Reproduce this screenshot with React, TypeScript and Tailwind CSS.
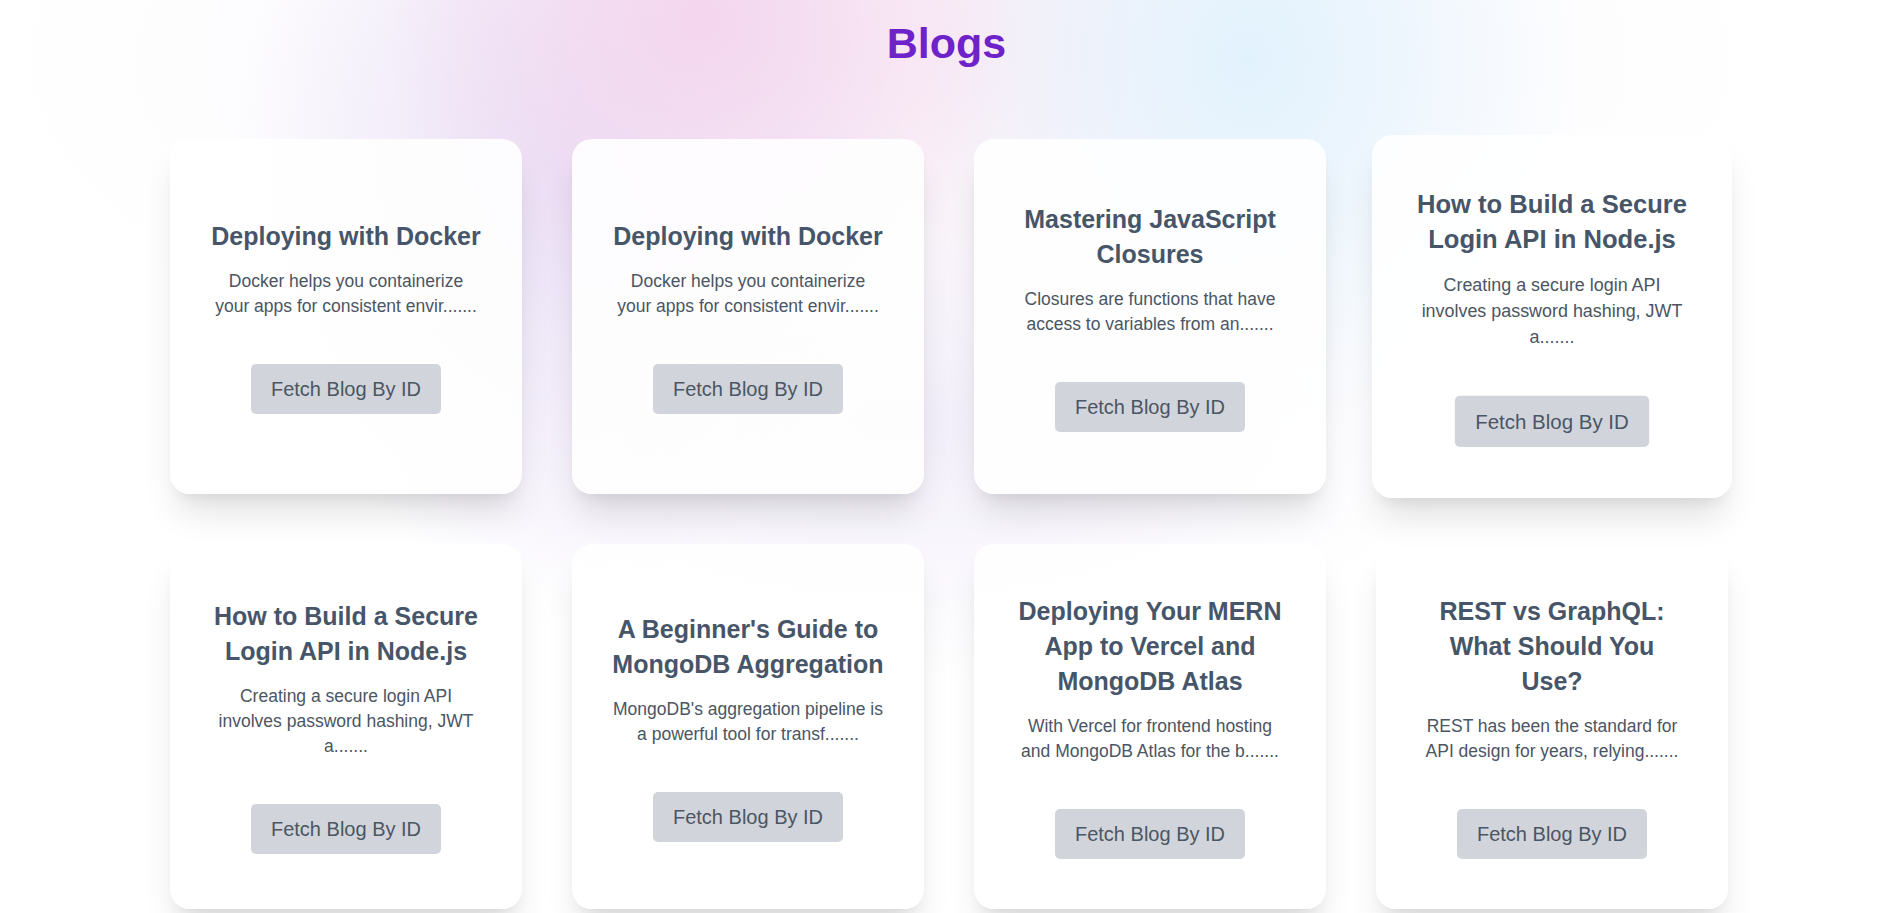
import React from "react";

type Blog = { title: string; desc: string; hover?: boolean };

const blogs: Blog[] = [
  { title: "Deploying with Docker", desc: "Docker helps you containerize your apps for consistent envir......." },
  { title: "Deploying with Docker", desc: "Docker helps you containerize your apps for consistent envir......." },
  { title: "Mastering JavaScript Closures", desc: "Closures are functions that have access to variables from an......." },
  { title: "How to Build a Secure Login API in Node.js", desc: "Creating a secure login API involves password hashing, JWT a.......", hover: true },
  { title: "How to Build a Secure Login API in Node.js", desc: "Creating a secure login API involves password hashing, JWT a......." },
  { title: "A Beginner's Guide to MongoDB Aggregation", desc: "MongoDB's aggregation pipeline is a powerful tool for transf......." },
  { title: "Deploying Your MERN App to Vercel and MongoDB Atlas", desc: "With Vercel for frontend hosting and MongoDB Atlas for the b......." },
  { title: "REST vs GraphQL: What Should You Use?", desc: "REST has been the standard for API design for years, relying......." },
];

function Card({ blog }: { blog: Blog }) {
  return (
    <div
      className={
        "flex flex-col items-center justify-center rounded-[20px] bg-white/90 px-10 py-[50px] text-center shadow-[0_25px_35px_-8px_rgba(0,0,0,0.12),0_10px_15px_-8px_rgba(0,0,0,0.08)] " +
        (blog.hover ? "scale-[1.023]" : "")
      }
    >
      <h2 className="mb-[15px] text-[25px] font-bold leading-[35px] text-[#475569]">{blog.title}</h2>
      <p className="mb-[45px] text-[17.5px] leading-[25px] text-[#4b5563]">{blog.desc}</p>
      <button className="rounded-[5px] bg-[#d1d5db] px-5 py-[10px] text-[20px] leading-[30px] text-[#4b5563]">
        Fetch Blog By ID
      </button>
    </div>
  );
}

export default function App() {
  return (
    <div className="min-h-screen bg-white bg-[radial-gradient(ellipse_320px_300px_at_700px_20px,#f4d6ee_0%,rgba(244,214,238,0)_100%),radial-gradient(ellipse_340px_420px_at_570px_170px,#e9dff6_0%,rgba(233,223,246,0)_100%),radial-gradient(ellipse_330px_380px_at_1250px_60px,#e2f2fd_0%,rgba(226,242,253,0)_100%),radial-gradient(ellipse_320px_320px_at_960px_40px,#faedf6_0%,rgba(250,237,246,0)_100%),radial-gradient(ellipse_560px_260px_at_900px_420px,#f2eefa_0%,rgba(242,238,250,0)_100%),radial-gradient(ellipse_900px_360px_at_880px_60px,#f8f6fc_0%,rgba(248,246,252,0)_100%)] font-['Liberation_Sans',Arial,sans-serif]">
      <h1 className="pt-[22px] text-center text-[43px] font-bold leading-none text-[#6d23c9]">Blogs</h1>
      <div className="pl-[170px] pr-[165px] pt-[74px] pb-[50px]">
        <div className="grid grid-cols-4 gap-[50px]">
          {blogs.map((b, i) => (
            <Card key={i} blog={b} />
          ))}
        </div>
      </div>
    </div>
  );
}
